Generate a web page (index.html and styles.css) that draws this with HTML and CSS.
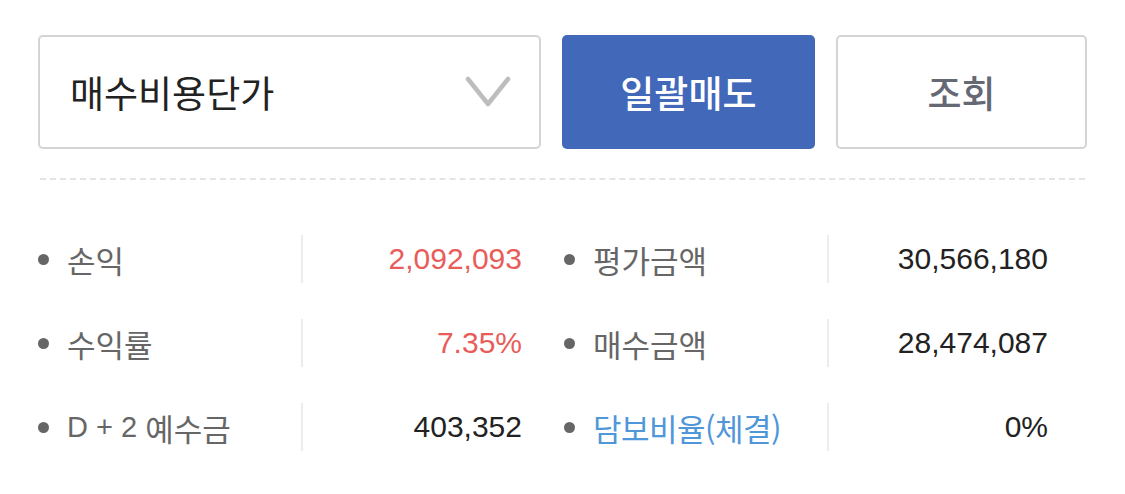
FILE: index.html
```html
<!DOCTYPE html>
<html lang="ko">
<head>
<meta charset="utf-8">
<link rel="stylesheet" href="styles.css">
</head>
<body>
<div class="panel">
  <div class="toolbar">
    <div class="select">
      <span class="select-text">매수비용단가</span>
      <svg class="chevron" width="46" height="32" viewBox="0 0 46 32"><path d="M3 3 L23 28 L43 3" fill="none" stroke="#bdbdbd" stroke-width="4.5" stroke-linecap="round" stroke-linejoin="round"/></svg>
    </div>
    <button class="btn btn-primary">일괄매도</button>
    <button class="btn btn-outline">조회</button>
  </div>
  <div class="sep"></div>
  <div class="stats">
    <div class="item"><div class="label"><span class="dot"></span>손익</div><div class="value red">2,092,093</div></div>
    <div class="item"><div class="label"><span class="dot"></span>평가금액</div><div class="value">30,566,180</div></div>
    <div class="item"><div class="label"><span class="dot"></span>수익률</div><div class="value red">7.35%</div></div>
    <div class="item"><div class="label"><span class="dot"></span>매수금액</div><div class="value">28,474,087</div></div>
    <div class="item"><div class="label"><span class="dot"></span><span class="latin">D + 2&nbsp;</span>예수금</div><div class="value">403,352</div></div>
    <div class="item"><div class="label"><span class="dot"></span><span class="link">담보비율(체결)</span></div><div class="value">0%</div></div>
  </div>
</div>
</body>
</html>
```

FILE: styles.css
```css
html, body {
  margin: 0;
  padding: 0;
  background: #fff;
}
body {
  font-family: "Noto Sans CJK KR", "Noto Sans", sans-serif;
  width: 1125px;
  height: 494px;
  overflow: hidden;
}
.panel {
  padding: 35px 38px 0 38px;
}
.toolbar {
  display: flex;
  height: 114px;
}
.select {
  box-sizing: border-box;
  width: 503px;
  border: 2px solid #d4d4d4;
  border-radius: 5px;
  display: flex;
  align-items: center;
  justify-content: space-between;
  padding: 0 28px 0 30px;
}
.select-text {
  font-size: 37px;
  color: #222;
}
.chevron {
  display: block;
}
.btn {
  box-sizing: border-box;
  font-family: "Noto Sans CJK KR", sans-serif;
  font-size: 37px;
  font-weight: 500;
  border-radius: 5px;
  margin: 0;
  padding: 0;
}
.btn-primary {
  width: 254px;
  margin-left: 21px;
  background: #4268b9;
  border: none;
  color: #fff;
}
.btn-outline {
  width: 251px;
  margin-left: 21px;
  background: #fff;
  border: 2px solid #d4d4d4;
  color: #646974;
}
.sep {
  margin: 29px 2px 0 2px;
  border-top: 2px dashed #e4e4e4;
}
.stats {
  display: grid;
  grid-template-columns: 526px 510px;
  grid-auto-rows: 84px;
  margin-top: 37px;
}
.item {
  display: flex;
  align-items: center;
}
.label {
  box-sizing: border-box;
  width: 263px;
  display: flex;
  align-items: center;
  font-size: 31px;
  color: #666;
  white-space: pre;
}
.latin {
  font-family: "Liberation Sans", Arial, sans-serif;
  font-size: 29px;
}
.dot {
  width: 11px;
  height: 11px;
  border-radius: 50%;
  background: #666;
  margin: 0 18px 0 0;
  flex: none;
}
.value {
  box-sizing: border-box;
  width: 221px;
  height: 48px;
  border-left: 2px solid #ececec;
  display: flex;
  align-items: center;
  justify-content: flex-end;
  font-family: "Liberation Sans", Arial, sans-serif;
  font-size: 30px;
  color: #222;
}
.red {
  color: #e85c5a;
}
.link {
  color: #4f97d8;
  letter-spacing: -0.5px;
}
```
